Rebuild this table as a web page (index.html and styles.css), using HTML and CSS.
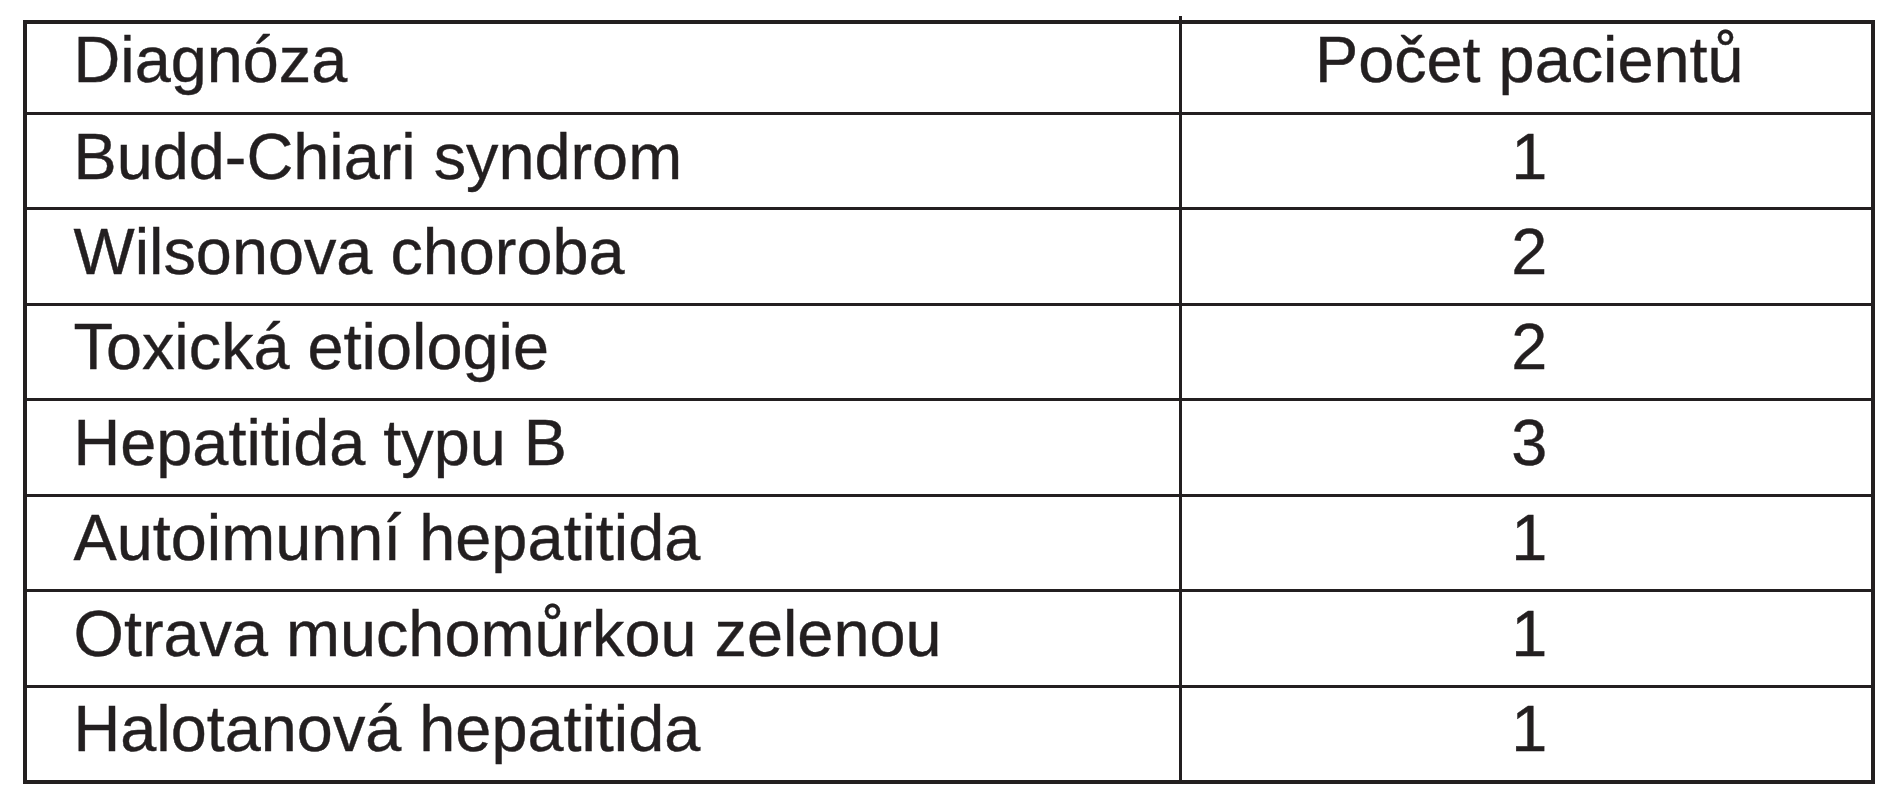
FILE: index.html
```html
<!DOCTYPE html>
<html lang="cs">
<head>
<meta charset="utf-8">
<title>Diagnóza</title>
<link rel="stylesheet" href="styles.css">
</head>
<body>
<div class="page">
  <table class="diag">
    <thead>
      <tr>
        <th class="name">Diagnóza</th>
        <th class="count tick">Počet pacientů</th>
      </tr>
    </thead>
    <tbody>
      <tr><td class="name">Budd-Chiari syndrom</td><td class="count">1</td></tr>
      <tr><td class="name">Wilsonova choroba</td><td class="count">2</td></tr>
      <tr><td class="name">Toxická etiologie</td><td class="count">2</td></tr>
      <tr><td class="name">Hepatitida typu B</td><td class="count">3</td></tr>
      <tr><td class="name">Autoimunní hepatitida</td><td class="count">1</td></tr>
      <tr><td class="name">Otrava muchomůrkou zelenou</td><td class="count">1</td></tr>
      <tr><td class="name">Halotanová hepatitida</td><td class="count">1</td></tr>
    </tbody>
  </table>
</div>
</body>
</html>
```
FILE: styles.css
```css
html, body {
  margin: 0;
  padding: 0;
  background: #ffffff;
}

.page {
  padding: 20px 0 0 23px;
}

.diag {
  border-collapse: separate;
  border-spacing: 0;
  border: 4px solid #231f20;
  width: 1852px;
  table-layout: fixed;
  font-family: "Liberation Sans", Arial, sans-serif;
  font-size: 64.8px;
  line-height: 64px;
  color: #231f20;
  -webkit-text-stroke: 0.4px #231f20;
}

.diag th,
.diag td {
  font-weight: normal;
  text-align: left;
  vertical-align: top;
  padding: 9.6px 0 18.83px 0;
  border-top: 3px solid #231f20;
  white-space: nowrap;
}

.diag thead th {
  border-top: none;
  padding-top: 3.6px;
  padding-bottom: 20.4px;
}

.diag .name {
  width: 1105px;
  padding-left: 46.5px;
}

.diag .count {
  border-left: 3px solid #231f20;
  text-align: center;
  padding-left: 6px;
}

.diag .tick {
  position: relative;
}

.diag .tick::before {
  content: "";
  position: absolute;
  left: -3px;
  top: -8px;
  width: 3px;
  height: 8px;
  background: #231f20;
}
```
